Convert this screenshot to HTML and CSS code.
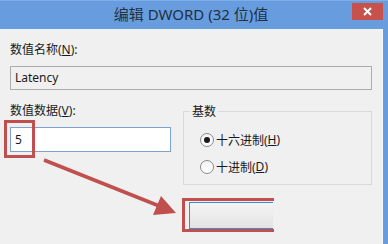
FILE: index.html
```html
<!DOCTYPE html>
<html lang="zh-CN">
<head>
<meta charset="utf-8">
<title>编辑 DWORD (32 位)值</title>
<link rel="stylesheet" href="styles.css">
</head>
<body>
<div class="window">
  <header class="titlebar">
    <div class="title">编辑 DWORD (32 位)值</div>
    <div class="close">
      <svg width="31" height="17" viewBox="0 0 31 17"><path d="M12 5l7 7M19 5l-7 7" stroke="#fff" stroke-width="2" fill="none"/></svg>
    </div>
  </header>
  <div class="main">
    <div class="content">
      <div class="label">数值名称(<u>N</u>):</div>
      <div class="field readonly">Latency</div>
      <div class="row">
        <div class="col">
          <div class="label">数值数据(<u>V</u>):</div>
          <div class="field data">5</div>
        </div>
        <fieldset class="group">
          <legend>基数</legend>
          <div class="radio-row"><span class="radio checked"></span>十六进制(<u>H</u>)</div>
          <div class="radio-row"><span class="radio"></span>十进制(<u>D</u>)</div>
        </fieldset>
      </div>
      <div class="buttons"><div class="btn"></div></div>
    </div>
    <div class="frame"></div>
  </div>
  <svg class="annot" width="388" height="244" viewBox="0 0 388 244">
    <rect x="5.5" y="121.5" width="28" height="35" fill="none" stroke="#c0504d" stroke-width="3"/>
    <path d="M274 199.5H183.5V230.5H274" fill="none" stroke="#c0504d" stroke-width="3"/>
    <line x1="44" y1="160" x2="158" y2="205.5" stroke="#c0504d" stroke-width="3.5"/>
    <polygon points="176,213 153,215 161,196" fill="#c0504d"/>
  </svg>
</div>
</body>
</html>
```
FILE: styles.css
```css
* { box-sizing: border-box; }
html, body { margin: 0; padding: 0; }
body {
  width: 388px;
  height: 244px;
  overflow: hidden;
  background: #f0f0f0;
  font-family: "Noto Sans", "Noto Sans CJK SC", sans-serif;
  font-size: 12px;
  color: #1a1a1a;
}
.window { position: relative; width: 388px; height: 244px; }
.titlebar {
  display: flex;
  align-items: flex-start;
  height: 29px;
  background: #679ddf;
  border-top: 1px solid #7db0ea;
  padding: 0 5px 0 30px;
}
.title {
  flex: 1;
  text-align: center;
  font-size: 15px;
  line-height: 27px;
  color: #22303f;
}
.close {
  width: 31px;
  height: 17px;
  margin-top: 2px;
  background: #c7514b;
  display: flex;
}
.main { display: flex; height: 215px; }
.content { flex: 1; padding: 13px 10px 0 10px; }
.frame { width: 6px; background: #679ddf; border-left: 1px solid #f7f9fc; }
.label { height: 15px; line-height: 15px; }
.field {
  margin-top: 9px;
  height: 24px;
  border: 1px solid #adadad;
  padding: 0 4px;
  line-height: 22px;
}
.readonly { background: #f0f0f0; }
.row { display: flex; align-items: flex-start; margin-top: 13px; }
.col { width: 161px; }
.data { height: 25px; line-height: 23px; background: #fff; border-color: #7da2ce; }
.group {
  margin: 1px 0 0 12px;
  width: 189px;
  min-width: 0;
  border: 1px solid #d9d9d9;
  padding: 7px 0 4px 6px;
}
.group legend { padding: 0 2px; line-height: 15px; font-size: 12px; }
.radio-row { display: flex; align-items: center; height: 27px; padding-left: 10px; }
.radio {
  width: 14px;
  height: 14px;
  border-radius: 50%;
  border: 1px solid #8b8b8b;
  background: linear-gradient(#f2f2f2, #ffffff);
  margin-right: 2px;
  display: flex;
  align-items: center;
  justify-content: center;
}
.radio.checked::after {
  content: "";
  width: 6px;
  height: 6px;
  border-radius: 50%;
  background: #1a1a1a;
}
.buttons { margin-top: 17px; padding-left: 179px; }
.btn {
  width: 84px;
  height: 27px;
  border: 1px solid #3f8ad6;
  border-right: none;
  background: linear-gradient(#f4f4f4, #e3e3e3);
}
.annot { position: absolute; top: 0; left: 0; pointer-events: none; }
```
